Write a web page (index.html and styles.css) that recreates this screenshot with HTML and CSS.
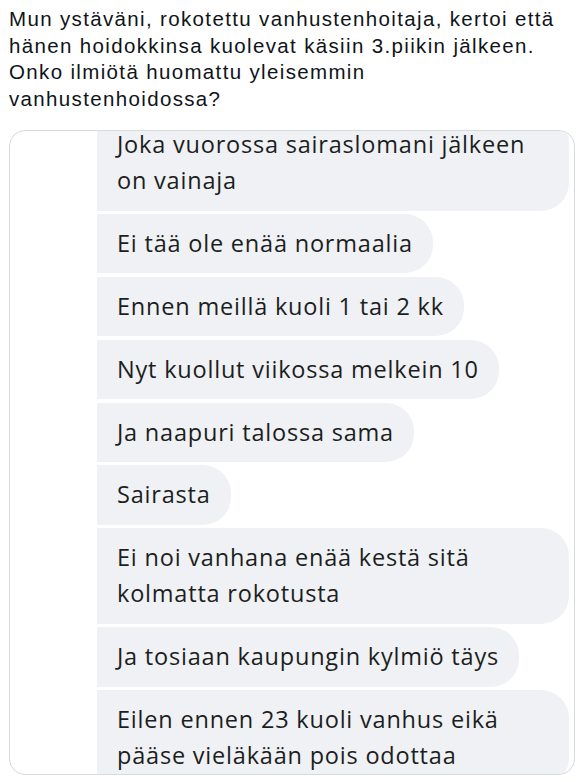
FILE: index.html
```html
<!DOCTYPE html>
<html lang="fi">
<head>
<meta charset="utf-8">
<title>Tweet</title>
<link rel="stylesheet" href="styles.css">
</head>
<body>
<div class="tweet">
  <p class="tweet-text">Mun ystäväni, rokotettu vanhustenhoitaja, kertoi että hänen hoidokkinsa kuolevat käsiin 3.piikin jälkeen.<br>Onko ilmiötä huomattu yleisemmin vanhustenhoidossa?</p>
  <div class="card">
    <div class="thread">
      <div class="bubble">Joka vuorossa sairaslomani jälkeen on vainaja</div>
      <div class="bubble">Ei tää ole enää normaalia</div>
      <div class="bubble">Ennen meillä kuoli 1 tai 2 kk</div>
      <div class="bubble">Nyt kuollut viikossa melkein 10</div>
      <div class="bubble">Ja naapuri talossa sama</div>
      <div class="bubble">Sairasta</div>
      <div class="bubble">Ei noi vanhana enää kestä sitä kolmatta rokotusta</div>
      <div class="bubble">Ja tosiaan kaupungin kylmiö täys</div>
      <div class="bubble">Eilen ennen 23 kuoli vanhus eikä pääse vieläkään pois odottaa</div>
    </div>
  </div>
</div>
</body>
</html>
```
FILE: styles.css
```css
html, body {
  margin: 0;
  padding: 0;
  background: #ffffff;
}

.tweet {
  width: 583px;
}

.tweet-text {
  margin: 0;
  padding: 6px 12px 0 9px;
  height: 130px;
  box-sizing: border-box;
  font-family: "Liberation Sans", Arial, sans-serif;
  font-size: 20.5px;
  letter-spacing: 1.35px;
  line-height: 26.7px;
  color: #0f1419;
}

.card {
  margin-left: 9px;
  width: 566px;
  height: 645px;
  box-sizing: border-box;
  border: 1px solid #d6dadd;
  border-radius: 16px;
  overflow: hidden;
  background: #ffffff;
}

.thread {
  display: flex;
  flex-direction: column;
  align-items: flex-start;
  gap: 3.4px;
  margin-top: -16px;
  padding-left: 87px;
}

.bubble {
  max-width: 472px;
  box-sizing: border-box;
  padding: 11px 20px 12.5px;
  background: #eff1f4;
  border-radius: 0 28px 28px 0;
  font-family: "Open Sans", "Liberation Sans", sans-serif;
  font-size: 23.5px;
  letter-spacing: 0.8px;
  line-height: 36px;
  color: #1c1e21;
}
```
